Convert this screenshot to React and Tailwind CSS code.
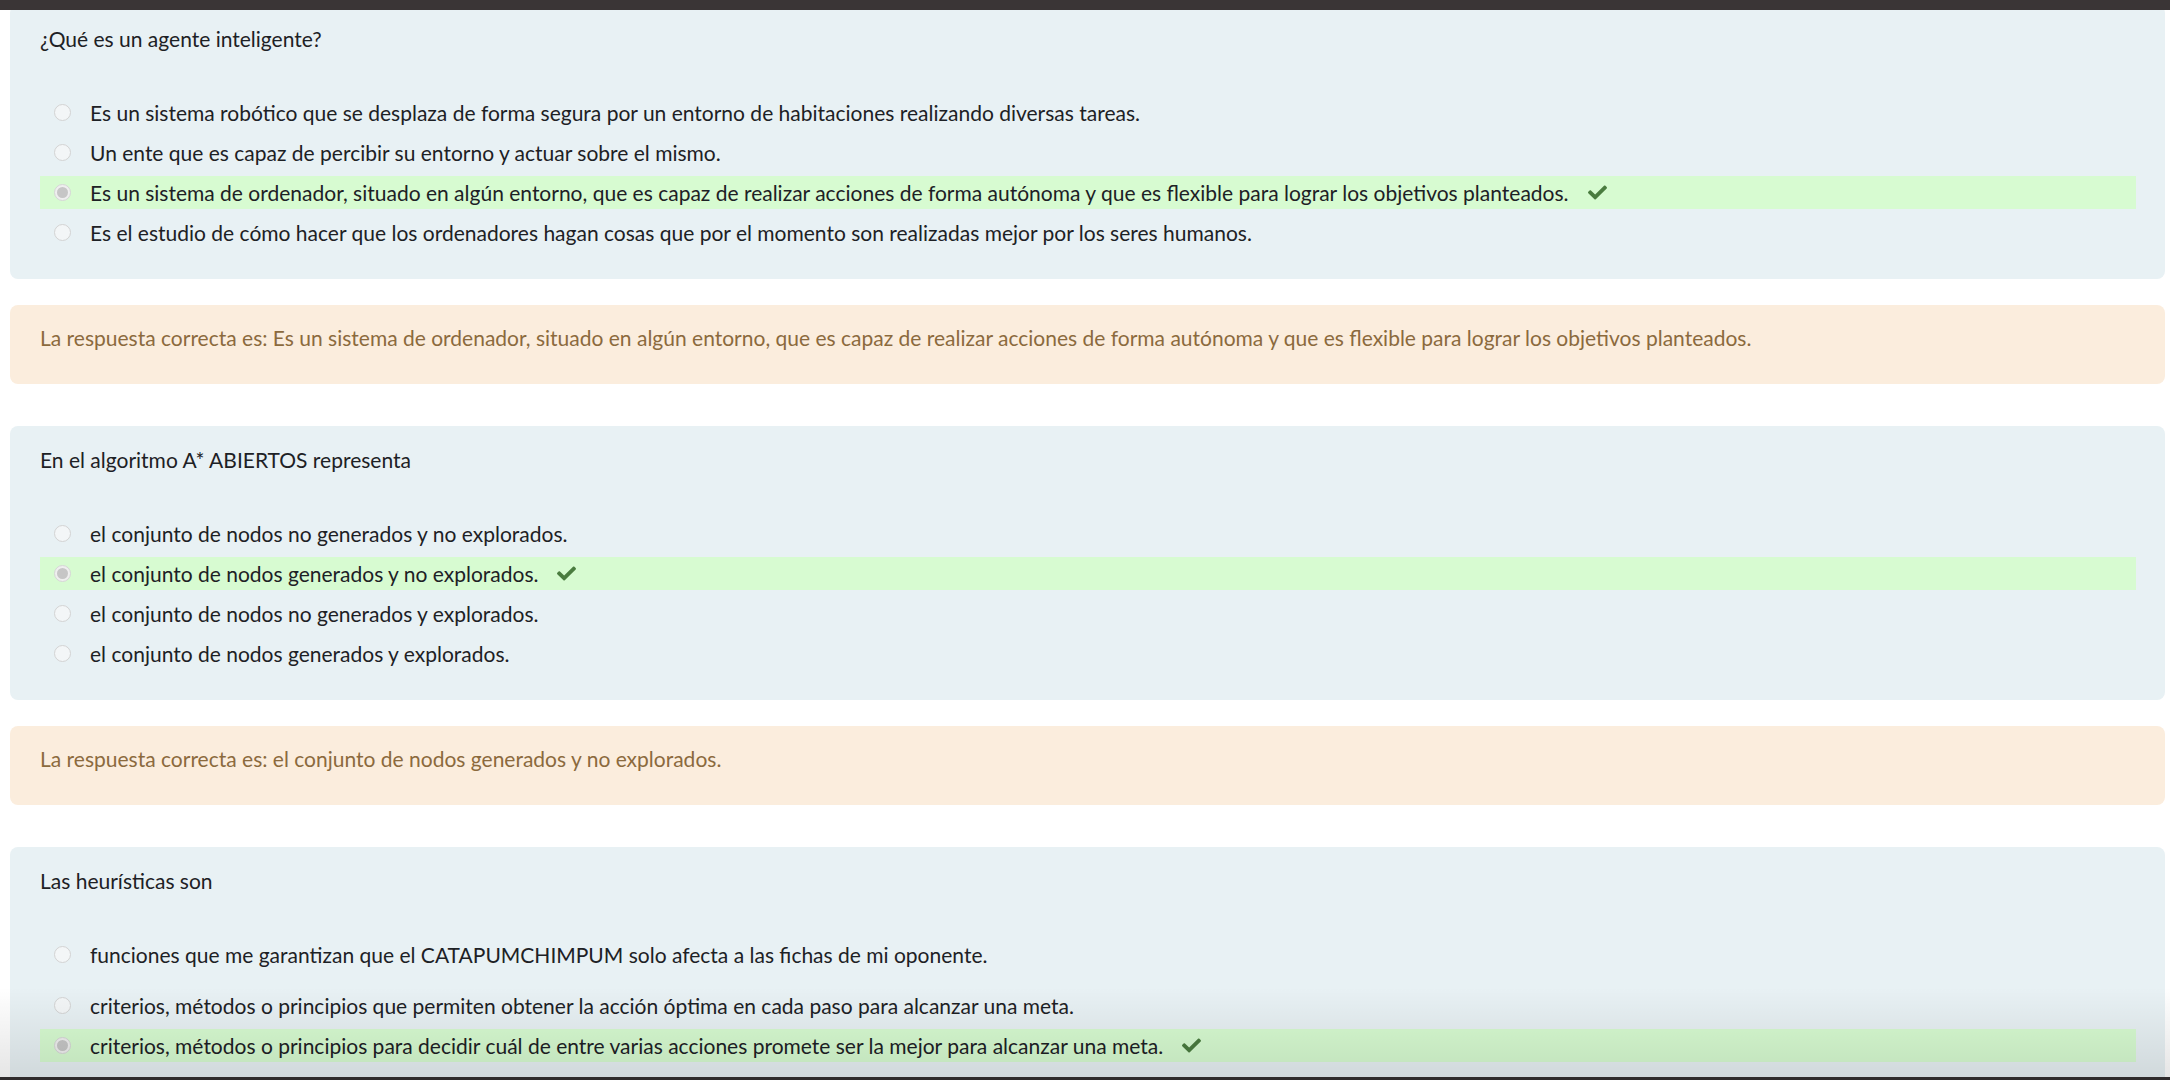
import { FaCheck } from 'react-icons/fa';

const questions = [
  {
    q: '¿Qué es un agente inteligente?',
    options: [
      'Es un sistema robótico que se desplaza de forma segura por un entorno de habitaciones realizando diversas tareas.',
      'Un ente que es capaz de percibir su entorno y actuar sobre el mismo.',
      'Es un sistema de ordenador, situado en algún entorno, que es capaz de realizar acciones de forma autónoma y que es flexible para lograr los objetivos planteados.',
      'Es el estudio de cómo hacer que los ordenadores hagan cosas que por el momento son realizadas mejor por los seres humanos.',
    ],
    correct: 2,
    feedback: 'Es un sistema de ordenador, situado en algún entorno, que es capaz de realizar acciones de forma autónoma y que es flexible para lograr los objetivos planteados.',
  },
  {
    q: 'En el algoritmo A* ABIERTOS representa',
    options: [
      'el conjunto de nodos no generados y no explorados.',
      'el conjunto de nodos generados y no explorados.',
      'el conjunto de nodos no generados y explorados.',
      'el conjunto de nodos generados y explorados.',
    ],
    correct: 1,
    feedback: 'el conjunto de nodos generados y no explorados.',
  },
  {
    q: 'Las heurísticas son',
    options: [
      'funciones que me garantizan que el CATAPUMCHIMPUM solo afecta a las fichas de mi oponente.',
      'criterios, métodos o principios que permiten obtener la acción óptima en cada paso para alcanzar una meta.',
      'criterios, métodos o principios para decidir cuál de entre varias acciones promete ser la mejor para alcanzar una meta.',
      'funciones que estiman el coste del camino más barato desde el nodo actual hasta el nodo objetivo.',
    ],
    correct: 2,
    gapAfterFirst: true,
  },
];

function Radio({ checked }) {
  if (checked) {
    return (
      <span className="flex items-center justify-center w-[17px] h-[17px] rounded-full border border-[#d6d6d6] bg-[#efefef] shrink-0">
        <span className="w-[11px] h-[11px] rounded-full bg-[#c6c6c6]" />
      </span>
    );
  }
  return <span className="w-[17px] h-[17px] rounded-full border border-[#d3d3d3] bg-[#f3f6f7] shrink-0" />;
}

function Question({ item }) {
  return (
    <div className="bg-[#e8f1f4] rounded-lg pl-[30px] pr-[29px] pt-[14px] pb-[30px]">
      <div className="leading-[40px]">{item.q}</div>
      <div className="flex flex-col gap-[7px] mt-[37px]">
        {item.options.map((opt, i) => (
          <div
            key={i}
            className={
              'flex items-center h-[33px] ' +
              (i === item.correct ? 'bg-[#d7fbd1] ' : '') +
              (item.gapAfterFirst && i === 1 ? 'mt-[11px]' : '')
            }
          >
            <span className="ml-[14px] mr-[19px] flex">
              <Radio checked={i === item.correct} />
            </span>
            <span className="whitespace-nowrap">{opt}</span>
            {i === item.correct && <FaCheck className="ml-[18px] text-[#4a7c3f] w-[21px] h-[19px]" />}
          </div>
        ))}
      </div>
    </div>
  );
}

export default function App() {
  return (
    <div
      className="relative h-[1080px] overflow-hidden bg-white text-[#1d2125] text-[21px]"
      style={{ fontFamily: 'Lato, "Noto Sans", sans-serif' }}
    >
      <div className="flex flex-col pl-[10px] pr-[5px] pt-[5px]">
        {questions.map((item, idx) => (
          <div key={idx} className="flex flex-col">
            <Question item={item} />
            {item.feedback && (
              <div className="mt-[26px] mb-[42px] h-[79px] rounded-lg bg-[#fbeddd] pl-[30px] pt-[13px] text-[#8b6a3d] leading-[40px]">
                La respuesta correcta es: {item.feedback}
              </div>
            )}
          </div>
        ))}
      </div>
      <div className="absolute top-0 left-0 right-0 h-[10px] bg-[#3a3536]" />
      <div className="absolute left-0 right-0 bottom-[3px] h-[90px] bg-gradient-to-b from-transparent to-black/10" />
      <div className="absolute left-0 right-0 bottom-0 h-[3px] bg-[#2f2b2c]" />
    </div>
  );
}
